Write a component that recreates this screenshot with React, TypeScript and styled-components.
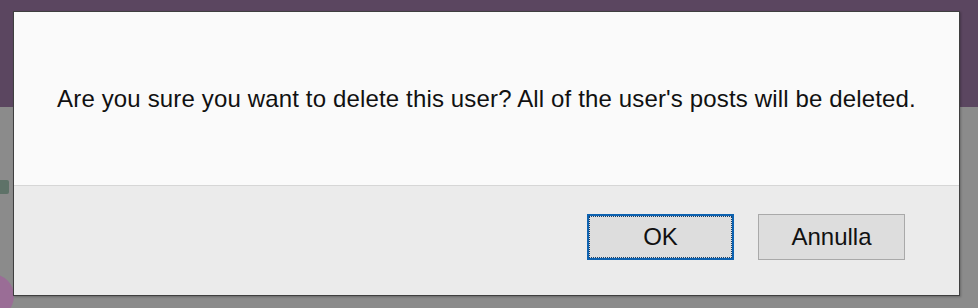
import React from "react";
import styled, { createGlobalStyle } from "styled-components";

const Global = createGlobalStyle`
  html, body { margin: 0; padding: 0; }
  body { width: 978px; height: 308px; overflow: hidden; font-family: "Liberation Sans", Arial, sans-serif; }
`;

const Page = styled.div`
  position: relative;
  width: 978px;
  height: 308px;
  overflow: hidden;
  background: linear-gradient(to bottom, #5b4660 0, #5b4660 107px, #8b8b8b 107px, #8b8b8b 100%);
  padding: 11px 0 0 13px;
  box-sizing: border-box;
`;

const BgGlyph = styled.div`
  position: absolute;
  left: 0;
  top: 180px;
  width: 9px;
  height: 14px;
  background: #5e7268;
  border-radius: 0 2px 2px 0;
`;

const BgCircle = styled.div`
  position: absolute;
  left: -30px;
  top: 274px;
  width: 44px;
  height: 44px;
  border-radius: 50%;
  background: #9a6d96;
`;

const Dialog = styled.div`
  position: relative;
  width: 947px;
  height: 285px;
  box-sizing: border-box;
  border: 1px solid #3f3f3f;
  display: flex;
  flex-direction: column;
  box-shadow: 1px 1px 2px rgba(0, 0, 0, 0.25);
`;

const Body = styled.div`
  height: 173px;
  background: #fafafa;
  display: flex;
  align-items: center;
  justify-content: center;
  border-bottom: 1px solid #d6d6d6;
`;

const Message = styled.p`
  margin: 0;
  font-family: "Liberation Sans", Arial, sans-serif;
  font-size: 24px;
  color: #111111;
  letter-spacing: 0.15px;
`;

const Footer = styled.div`
  flex: 1;
  background: #ebebeb;
  display: flex;
  justify-content: flex-end;
  align-items: flex-start;
  gap: 24px;
  padding: 28px 54px 0 0;
`;

const Button = styled.button<{ $primary?: boolean }>`
  width: 147px;
  height: 46px;
  box-sizing: border-box;
  font-family: "Liberation Sans", Arial, sans-serif;
  font-size: 24px;
  color: #111111;
  background: #dddddd;
  border: ${(p) => (p.$primary ? "2px solid #0d62b0" : "1px solid #a9a9a9")};
  outline: ${(p) => (p.$primary ? "1px dotted #1a3f66" : "none")};
  outline-offset: -3px;
  padding: 0;
  display: flex;
  align-items: center;
  justify-content: center;
`;

export default function App() {
  return (
    <>
      <Global />
      <Page>
        <BgGlyph />
        <BgCircle />
        <Dialog>
          <Body>
            <Message>
              Are you sure you want to delete this user? All of the user's posts will be deleted.
            </Message>
          </Body>
          <Footer>
            <Button $primary>OK</Button>
            <Button>Annulla</Button>
          </Footer>
        </Dialog>
      </Page>
    </>
  );
}
